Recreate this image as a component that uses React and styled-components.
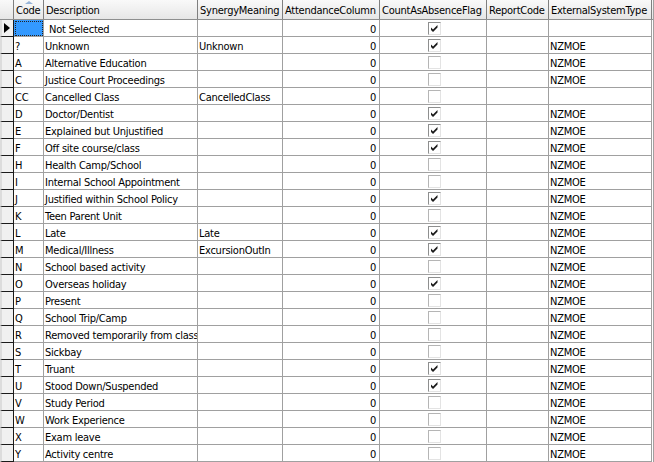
import React from "react";
import styled, { createGlobalStyle } from "styled-components";

const Global = createGlobalStyle`
  html, body { margin: 0; padding: 0; background: #fff; }
  body { font-family: "DejaVu Sans", sans-serif; }
`;

const COLS = "14px 30px 154px 85px 97px 107px 62px 103px";

const Grid = styled.div`
  width: 653px;
  border-right: 1px solid #a0a0a0;
  font-family: "DejaVu Sans Condensed", "DejaVu Sans", sans-serif;
  font-stretch: condensed;
  font-size: 11px;
  letter-spacing: -0.25px;
  color: #000;
`;

const HeaderRow = styled.div`
  display: grid;
  grid-template-columns: ${COLS};
  height: 20px;
  background: linear-gradient(#f9f9f9, #f0f0f0 50%, #e6e6e6);
  border-bottom: 1px solid #8e8f8f;
  box-sizing: border-box;
`;

const HeaderCell = styled.div`
  position: relative;
  border-right: 1px solid #7f7f7f;
  padding: 1px 0 0 2px;
  display: flex;
  align-items: center;
  white-space: nowrap;
  overflow: hidden;
  box-sizing: border-box;
`;

const SortGlyph = styled.span`
  position: absolute;
  top: 1px;
  left: 11px;
  width: 0;
  height: 0;
  border-left: 4px solid transparent;
  border-right: 4px solid transparent;
  border-bottom: 3px solid #97b4d8;
`;

const Row = styled.div`
  display: grid;
  grid-template-columns: ${COLS};
  height: 17px;
`;

const RowHeader = styled.div`
  background: #f0f0f0;
  border-right: 1px solid #1a1a1a;
  border-bottom: 1px solid #1a1a1a;
  border-left: 2px solid #dcdcdc;
  box-sizing: border-box;
  display: flex;
  align-items: center;
  padding-left: 2px;
`;

const Arrow = styled.span`
  width: 0;
  height: 0;
  border-top: 5px solid transparent;
  border-bottom: 5px solid transparent;
  border-left: 6px solid #000;
`;

const Cell = styled.div`
  border-right: 1px solid #a0a0a0;
  border-bottom: 1px solid #a0a0a0;
  box-sizing: border-box;
  display: flex;
  align-items: center;
  justify-content: ${(p) => (p.$align === "right" ? "flex-end" : p.$align === "center" ? "center" : "flex-start")};
  padding: 2px ${(p) => (p.$align === "right" ? "3px" : "0")} 0 ${(p) => (p.$indent ? "5px" : "1px")};
  white-space: nowrap;
  overflow: hidden;
  background: ${(p) => (p.$selected ? "#3399ff" : "#fff")};
  outline: ${(p) => (p.$selected ? "1px dotted #222" : "none")};
  outline-offset: -2px;
`;

const Check = styled.span`
  width: 13px;
  height: 13px;
  box-sizing: border-box;
  border: 1px solid ${(p) => (p.$on ? "#8e8f8f" : "#b5b5b5")};
  border-right-color: #e3e3e3;
  border-bottom-color: #e3e3e3;
  background: #fff;
  display: flex;
  align-items: center;
  justify-content: center;
  margin: -2px 0 0 1px;
`;

const CheckBox = ({ on }) => (
  <Check $on={on}>
    {on && (
      <svg width="9" height="9" viewBox="0 0 9 9">
        <path d="M1 3.5 L3 5.5 L7.5 1 L7.5 3.5 L3 8 L1 6 Z" fill="#1a1a1a" />
      </svg>
    )}
  </Check>
);

const rows = [
  ["", "Not Selected", "", true, ""],
  ["?", "Unknown", "Unknown", true, "NZMOE"],
  ["A", "Alternative Education", "", false, "NZMOE"],
  ["C", "Justice Court Proceedings", "", false, "NZMOE"],
  ["CC", "Cancelled Class", "CancelledClass", false, ""],
  ["D", "Doctor/Dentist", "", true, "NZMOE"],
  ["E", "Explained but Unjustified", "", true, "NZMOE"],
  ["F", "Off site course/class", "", true, "NZMOE"],
  ["H", "Health Camp/School", "", false, "NZMOE"],
  ["I", "Internal School Appointment", "", false, "NZMOE"],
  ["J", "Justified within School Policy", "", true, "NZMOE"],
  ["K", "Teen Parent Unit", "", false, "NZMOE"],
  ["L", "Late", "Late", true, "NZMOE"],
  ["M", "Medical/Illness", "ExcursionOutIn", true, "NZMOE"],
  ["N", "School based activity", "", false, "NZMOE"],
  ["O", "Overseas holiday", "", true, "NZMOE"],
  ["P", "Present", "", false, "NZMOE"],
  ["Q", "School Trip/Camp", "", false, "NZMOE"],
  ["R", "Removed temporarily from class", "", false, "NZMOE"],
  ["S", "Sickbay", "", false, "NZMOE"],
  ["T", "Truant", "", true, "NZMOE"],
  ["U", "Stood Down/Suspended", "", true, "NZMOE"],
  ["V", "Study Period", "", false, "NZMOE"],
  ["W", "Work Experience", "", false, "NZMOE"],
  ["X", "Exam leave", "", false, "NZMOE"],
  ["Y", "Activity centre", "", false, "NZMOE"],
];

const headers = [
  "Code",
  "Description",
  "SynergyMeaning",
  "AttendanceColumn",
  "CountAsAbsenceFlag",
  "ReportCode",
  "ExternalSystemType",
];

export default function App() {
  return (
    <>
      <Global />
      <Grid>
        <HeaderRow>
          <HeaderCell />
          {headers.map((h, i) => (
            <HeaderCell key={h}>
              {i === 0 && <SortGlyph />}
              {h}
            </HeaderCell>
          ))}
        </HeaderRow>
        {rows.map(([code, desc, syn, flag, ext], i) => (
          <Row key={i}>
            <RowHeader>{i === 0 && <Arrow />}</RowHeader>
            <Cell $selected={i === 0}>{code}</Cell>
            <Cell $indent={i === 0}>{desc}</Cell>
            <Cell>{syn}</Cell>
            <Cell $align="right">0</Cell>
            <Cell $align="center">
              <CheckBox on={flag} />
            </Cell>
            <Cell />
            <Cell>{ext}</Cell>
          </Row>
        ))}
      </Grid>
    </>
  );
}
